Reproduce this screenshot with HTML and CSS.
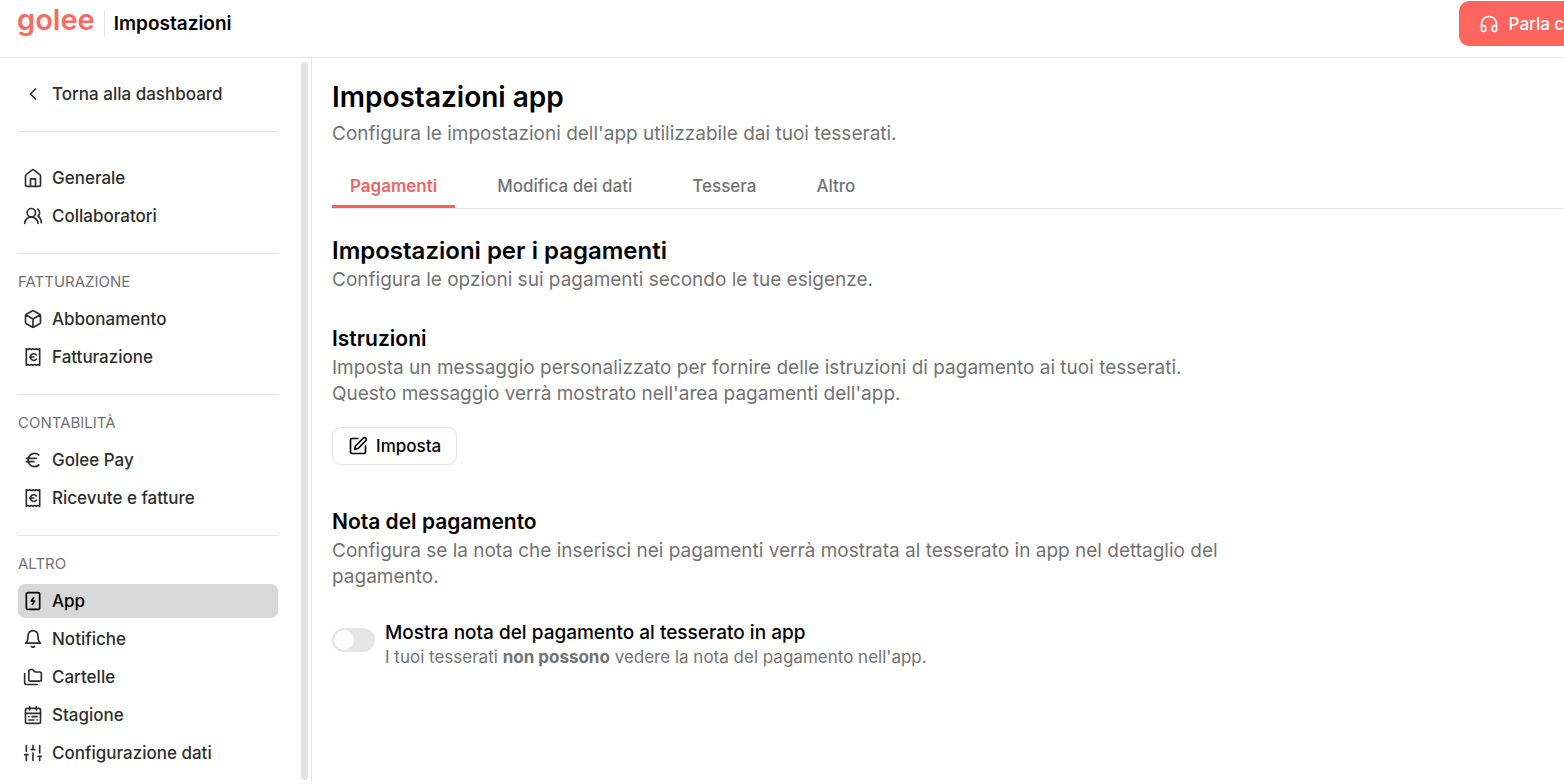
FILE: index.html
```html
<!DOCTYPE html>
<html lang="it">
<head>
    <meta charset="UTF-8">
    <meta name="viewport" content="width=device-width, initial-scale=1.0">
    <title>Golee - Impostazioni</title>
    <link rel="stylesheet" href="styles.css">
</head>
<body>
    <header class="header">
        <a class="logo" href="#">golee</a>
        <div class="header-title">Impostazioni</div>
        <button class="help" type="button">
            <svg class="icon" viewBox="0 0 24 24"><path d="M3 14h3a2 2 0 0 1 2 2v3a2 2 0 0 1-2 2H5a2 2 0 0 1-2-2v-7a9 9 0 0 1 18 0v7a2 2 0 0 1-2 2h-1a2 2 0 0 1-2-2v-3a2 2 0 0 1 2-2h3"/></svg>
            Parla con noi
        </button>
    </header>

    <div class="layout">
        <aside class="sidebar">
            <nav class="menu">
                <div class="group">
                    <a class="item" href="#">
                        <svg class="icon" viewBox="0 0 24 24"><path d="M15 18l-6-6 6-6"/></svg>
                        Torna alla dashboard
                    </a>
                </div>
                <div class="group main-group">
                    <a class="item" href="#">
                        <svg class="icon" viewBox="0 0 24 24"><path d="M9 22v-9h6v9M3 9.500a2 2 0 0 1 .800-1.600l7-5.400a2 2 0 0 1 2.400 0l7 5.400a2 2 0 0 1 .800 1.600V20a2 2 0 0 1-2 2H5a2 2 0 0 1-2-2z"/></svg>
                        Generale
                    </a>
                    <a class="item" href="#">
                        <svg class="icon" viewBox="0 0 24 24"><path d="M18 21a8 8 0 0 0-16 0"/><circle cx="10" cy="8" r="5"/><path d="M22 20c0-3.400-2-6.500-4-8a5 5 0 0 0-.500-8.300"/></svg>
                        Collaboratori
                    </a>
                </div>
                <div class="group">
                    <div class="group-title">FATTURAZIONE</div>
                    <a class="item" href="#">
                        <svg class="icon" viewBox="0 0 24 24"><path d="M21 8a2 2 0 0 0-1-1.700l-7-4a2 2 0 0 0-2 0l-7 4A2 2 0 0 0 3 8v8a2 2 0 0 0 1 1.700l7 4a2 2 0 0 0 2 0l7-4A2 2 0 0 0 21 16zM3.300 7l8.700 5 8.700-5M12 22V12"/></svg>
                        Abbonamento
                    </a>
                    <a class="item" href="#">
                        <svg class="icon" viewBox="0 0 24 24"><path d="M4 2v20l2-1 2 1 2-1 2 1 2-1 2 1 2-1 2 1V2l-2 1-2-1-2 1-2-1-2 1-2-1-2 1zM8 12h5M16 9.500a4 4 0 1 0 0 5.200"/></svg>
                        Fatturazione
                    </a>
                </div>
                <div class="group">
                    <div class="group-title">CONTABILITÀ</div>
                    <a class="item" href="#">
                        <svg class="icon" viewBox="0 0 24 24"><path d="M4 10h12M4 14h9M19 6a7.700 7.700 0 0 0-5.200-2A7.900 7.900 0 0 0 6 12c0 4.400 3.500 8 7.800 8 2 0 3.800-.800 5.200-2"/></svg>
                        Golee Pay
                    </a>
                    <a class="item" href="#">
                        <svg class="icon" viewBox="0 0 24 24"><path d="M4 2v20l2-1 2 1 2-1 2 1 2-1 2 1 2-1 2 1V2l-2 1-2-1-2 1-2-1-2 1-2-1-2 1zM8 12h5M16 9.500a4 4 0 1 0 0 5.200"/></svg>
                        Ricevute e fatture
                    </a>
                </div>
                <div class="group">
                    <div class="group-title">ALTRO</div>
                    <a class="item active" href="#">
                        <svg class="icon" viewBox="0 0 24 24"><rect x="4" y="2" width="16" height="20" rx="2"/><path d="M12.700 8 10 12h4l-2.700 4"/></svg>
                        App
                    </a>
                    <a class="item" href="#">
                        <svg class="icon" viewBox="0 0 24 24"><path d="M10.300 21a2 2 0 0 0 3.400 0M6 8a6 6 0 0 1 12 0c0 7 3 9 3 9H3s3-2 3-9"/></svg>
                        Notifiche
                    </a>
                    <a class="item" href="#">
                        <svg class="icon" viewBox="0 0 24 24"><path d="M20 17a2 2 0 0 0 2-2V8a2 2 0 0 0-2-2h-4.900a2 2 0 0 1-1.700-.900l-.800-1.200a2 2 0 0 0-1.700-.900H9a2 2 0 0 0-2 2v10a2 2 0 0 0 2 2zM2 8v11a2 2 0 0 0 2 2h13"/></svg>
                        Cartelle
                    </a>
                    <a class="item" href="#">
                        <svg class="icon" viewBox="0 0 24 24"><rect x="3" y="4" width="18" height="18" rx="2"/><path d="M16 2v4M8 2v4M3 10h18M17 14h-6M13 18H7M7 14h.010M17 18h.010"/></svg>
                        Stagione
                    </a>
                    <a class="item" href="#">
                        <svg class="icon" viewBox="0 0 24 24"><path d="M4 21v-7M4 10V3M12 21v-9M12 8V3M20 21v-5M20 12V3M2 14h4M10 8h4M18 16h4"/></svg>
                        Configurazione dati
                    </a>
                </div>
            </nav>
            <div class="scrollbar"></div>
        </aside>

        <main class="content">
            <h1>Impostazioni app</h1>
            <p class="text">Configura le impostazioni dell'app utilizzabile dai tuoi tesserati.</p>

            <div class="tabs">
                <button class="tab selected" type="button">Pagamenti</button>
                <button class="tab" type="button">Modifica dei dati</button>
                <button class="tab" type="button">Tessera</button>
                <button class="tab" type="button">Altro</button>
            </div>

            <h2>Impostazioni per i pagamenti</h2>
            <p class="text">Configura le opzioni sui pagamenti secondo le tue esigenze.</p>

            <section class="setting">
                <h3>Istruzioni</h3>
                <p class="text">Imposta un messaggio personalizzato per fornire delle istruzioni di pagamento ai tuoi tesserati. Questo messaggio verrà mostrato nell'area pagamenti dell'app.</p>
                <button class="edit" type="button">
                    <svg class="icon" viewBox="0 0 24 24"><path d="M12 3H5a2 2 0 0 0-2 2v14a2 2 0 0 0 2 2h14a2 2 0 0 0 2-2v-7"/><path d="M18.400 2.600a2.100 2.100 0 0 1 3 3L12 15l-4 1 1-4z"/></svg>
                    Imposta
                </button>
            </section>

            <section class="setting">
                <h3>Nota del pagamento</h3>
                <p class="text">Configura se la nota che inserisci nei pagamenti verrà mostrata al tesserato in app nel dettaglio del pagamento.</p>
                <div class="toggle-row">
                    <input class="toggle" type="checkbox" id="nota">
                    <div>
                        <label for="nota">Mostra nota del pagamento al tesserato in app</label>
                        <p class="hint">I tuoi tesserati <b>non possono</b> vedere la nota del pagamento nell'app.</p>
                    </div>
                </div>
            </section>
        </main>
    </div>
</body>
</html>
```
FILE: styles.css
```css
*{
    box-sizing: border-box;
}
body{
    margin: 0;
    height: 100vh;
    display: flex;
    flex-direction: column;
    overflow: hidden;
    font-family: Inter, sans-serif;
    font-size: 17px;
    color: #000;
    background-color: #fff;
}
h1, h2, h3, p{
    margin: 0;
    font-weight: 600;
}
button{
    font-family: inherit;
    font-size: 17px;
    font-weight: 500;
    cursor: pointer;
}
.icon{
    width: 20px;
    height: 20px;
    flex-shrink: 0;
    fill: none;
    stroke: currentColor;
    stroke-width: 2;
    stroke-linecap: round;
    stroke-linejoin: round;
}

/* header */
.header{
    height: 58px;
    flex-shrink: 0;
    display: flex;
    align-items: flex-start;
    padding-left: 17px;
    border-bottom: 1px solid #e5e5e5;
}
.logo{
    font-size: 29px;
    font-weight: 600;
    line-height: 40px;
    color: #f66c64;
    text-decoration: none;
}
.header-title{
    margin: 10px 0 0 9px;
    padding-left: 9px;
    border-left: 1px solid #e5e5e5;
    font-size: 19px;
    font-weight: 600;
    line-height: 27px;
}
.help{
    display: flex;
    align-items: center;
    gap: 10px;
    height: 45px;
    margin: 1px -70px 0 auto;
    padding: 0 20px;
    border: none;
    border-radius: 10px;
    color: #fff;
    background-color: #fd655e;
}

.layout{
    flex: 1;
    min-height: 0;
    display: flex;
}

/* sidebar */
.sidebar{
    width: 312px;
    flex-shrink: 0;
    display: flex;
    border-right: 1px solid #e5e5e5;
}
.menu{
    flex: 1;
    padding: 19px 20px 0 18px;
}
.scrollbar{
    width: 7px;
    margin: 4px 3px;
    border-radius: 4px;
    background-color: #e2e2e2;
}
.group{
    display: flex;
    flex-direction: column;
    gap: 4px;
    padding-bottom: 20px;
}
.group + .group{
    padding-top: 17px;
    border-top: 1px solid #e5e5e5;
}
.group + .main-group{
    padding-top: 29px;
}
.group-title{
    margin-bottom: 5px;
    font-size: 15px;
    line-height: 22px;
    color: #737373;
}
.item{
    display: flex;
    align-items: center;
    gap: 9px;
    height: 34px;
    padding: 0 5px;
    border-radius: 7px;
    font-weight: 500;
    color: #2e2e2e;
    text-decoration: none;
}
.active{
    color: #000;
    background-color: #d8d8d8;
}

/* content */
.content{
    flex: 1;
    min-width: 0;
    padding: 20px 0 0 20px;
}
h1{
    font-size: 28px;
    line-height: 38px;
}
h2{
    font-size: 24px;
    line-height: 33px;
}
h3{
    font-size: 21px;
    line-height: 33px;
}
.text{
    max-width: 900px;
    font-size: 19px;
    font-weight: 400;
    line-height: 26px;
    color: #737373;
}
h1 + .text{
    margin-top: 5px;
}
.tabs{
    display: flex;
    gap: 24px;
    margin: 16px 0 25px;
    border-bottom: 1px solid #e5e5e5;
}
.tab{
    height: 45px;
    padding: 4px 18px 0;
    border: none;
    border-bottom: 3px solid transparent;
    color: #737373;
    background: none;
}
.selected{
    font-weight: 600;
    color: #f0655f;
    border-color: #f0655f;
}
.setting{
    margin-top: 29px;
}
.edit{
    display: flex;
    align-items: center;
    gap: 8px;
    height: 38px;
    margin: 20px 0 40px;
    padding: 0 15px;
    border: 1px solid #e5e5e5;
    border-radius: 9px;
    background-color: #fff;
}
.toggle-row{
    display: flex;
    gap: 10px;
    margin-top: 30px;
}
.toggle{
    appearance: none;
    display: flex;
    align-items: center;
    width: 43px;
    height: 24px;
    margin: 8px 0 0;
    padding: 2px;
    border-radius: 12px;
    background-color: #e5e5e5;
    cursor: pointer;
}
.toggle::before{
    content: "";
    width: 20px;
    height: 20px;
    border-radius: 50%;
    background-color: #fff;
}
.toggle:checked{
    justify-content: flex-end;
    background-color: #fd655e;
}
.toggle-row label{
    display: block;
    font-size: 19px;
    font-weight: 500;
    line-height: 25px;
}
.hint{
    font-size: 17px;
    font-weight: 400;
    line-height: 24px;
    color: #737373;
}
```
